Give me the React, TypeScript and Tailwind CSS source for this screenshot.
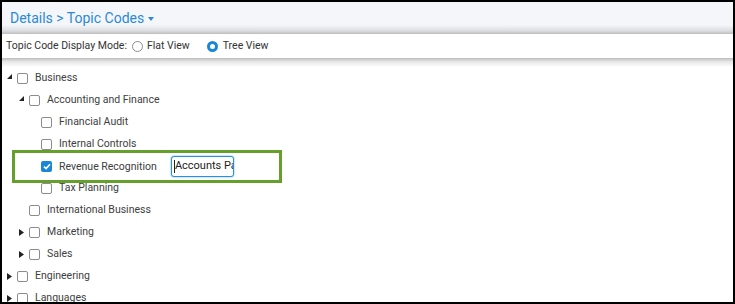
import type { ReactNode } from "react";

type Node = {
  label: string;
  level: number;
  arrow?: "open" | "closed";
  checked?: boolean;
  editing?: boolean;
};

const nodes: Node[] = [
  { label: "Business", level: 0, arrow: "open" },
  { label: "Accounting and Finance", level: 1, arrow: "open" },
  { label: "Financial Audit", level: 2 },
  { label: "Internal Controls", level: 2 },
  { label: "Revenue Recognition", level: 2, checked: true, editing: true },
  { label: "Tax Planning", level: 2 },
  { label: "International Business", level: 1 },
  { label: "Marketing", level: 1, arrow: "closed" },
  { label: "Sales", level: 1, arrow: "closed" },
  { label: "Engineering", level: 0, arrow: "closed" },
  { label: "Languages", level: 0, arrow: "closed" },
];

const padByLevel: Record<number, string> = {
  0: "pl-[3px]",
  1: "pl-[15px]",
  2: "pl-[27px]",
};

function Arrow({ kind }: { kind?: "open" | "closed" }) {
  if (kind === "open")
    return (
      <svg width="5" height="5" viewBox="0 0 5 5" className="mt-[-3px]">
        <polygon points="5,0 5,5 0,5" fill="#222" />
      </svg>
    );
  if (kind === "closed")
    return (
      <svg width="5" height="7" viewBox="0 0 5 7">
        <polygon points="0,0 5,3.5 0,7" fill="#222" />
      </svg>
    );
  return null;
}

function Checkbox({ checked }: { checked?: boolean }) {
  if (checked)
    return (
      <span className="w-[11px] h-[11px] rounded-[2px] bg-[#1a86d8] flex items-center justify-center">
        <svg width="8" height="7" viewBox="0 0 8 7">
          <path d="M1 3.6 L3.1 5.6 L7 1.2" stroke="#fff" strokeWidth="1.7" fill="none" />
        </svg>
      </span>
    );
  return <span className="w-[11px] h-[11px] rounded-[2px] border border-[#8c8c8c] bg-white" />;
}

function Row({ node, children }: { node: Node; children?: ReactNode }) {
  return (
    <div className={`relative h-[22px] flex items-center ${padByLevel[node.level]}`}>
      <span className="w-[12px] flex items-center justify-start pl-[2px]">
        <Arrow kind={node.arrow} />
      </span>
      <Checkbox checked={node.checked} />
      <span className="ml-[7px] text-[10.5px] text-[#404040]">{node.label}</span>
      {children}
    </div>
  );
}

function EditingRow({ node }: { node: Node }) {
  return (
    <div className="relative h-[22px]">
      <div className="absolute left-[10px] top-[-5px] w-[270px] h-[33px] border-[3px] border-[#66a02c] bg-white z-10 flex items-center pl-[26px]">
        <span className="flex items-center">
          <Checkbox checked={node.checked} />
          <span className="ml-[7px] text-[10.5px] text-[#404040]">{node.label}</span>
          <span className="ml-[14px] w-[63px] h-[21px] rounded-[3px] border border-[#2a8fdc] shadow-[0_0_2px_#5aa9e6] bg-white overflow-hidden flex items-center pl-[2px]">
            <span className="w-px h-[13px] bg-[#222] shrink-0" />
            <span className="text-[11px] text-[#222] whitespace-nowrap">Accounts Payable</span>
          </span>
        </span>
      </div>
    </div>
  );
}

export default function App() {
  return (
    <div
      className="w-[735px] h-[304px] overflow-hidden bg-white border-2 border-black"
      style={{ fontFamily: "Roboto, 'Liberation Sans', sans-serif" }}
    >
      <div className="h-[32px] flex items-center pl-[8px] bg-[linear-gradient(to_bottom,#f5f6fa_0%,#f5f6fa_72%,#dcdde0_90%,#bdbdbd_100%)]">
        <span className="text-[14px] text-[#2a8ad6] leading-none">Details &gt; Topic Codes</span>
        <svg width="6" height="4" viewBox="0 0 6 4" className="ml-[4px] mt-[1px]">
          <polygon points="0,0 6,0 3,4" fill="#2a8ad6" />
        </svg>
      </div>
      <div className="h-[24px] flex items-center pl-[4px] text-[10.5px] text-[#333]">
        <span>Topic Code Display Mode:</span>
        <span className="ml-[5px] w-[11px] h-[11px] rounded-full border border-[#8c8c8c]" />
        <span className="ml-[4px]">Flat View</span>
        <span className="ml-[17px] w-[11px] h-[11px] rounded-full border-[3px] border-[#1a86d8] bg-white" />
        <span className="ml-[5px]">Tree View</span>
      </div>
      <div className="h-[9px] bg-[linear-gradient(to_bottom,#bdbdbd,#e6e6e6_40%,#ffffff)]" />
      <div className="flex flex-col">
        {nodes.map((n) => (n.editing ? <EditingRow key={n.label} node={n} /> : <Row key={n.label} node={n} />))}
      </div>
    </div>
  );
}
